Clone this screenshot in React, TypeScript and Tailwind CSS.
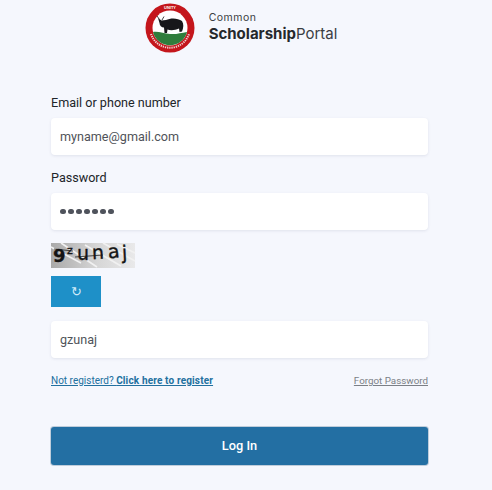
import React from "react";

function Logo() {
  return (
    <svg width="50" height="50" viewBox="0 0 50 50" className="shrink-0">
      <circle cx="25" cy="25" r="24.5" fill="#c4161c" />
      <circle cx="25" cy="25" r="17.5" fill="#ffffff" />
      <path d="M8 29 A17.5 17.5 0 0 0 42 29 C36 30 31 31.5 25 31 C19 30.5 13 28 8 29 Z" fill="#2f7d3c" />
      <path d="M13 15 L16.5 17.5 L21 17 C26 14.5 33 15 37 18 C39 21 38.5 25 37 28.5 L34.5 29 L34 25.5 C30 27.5 25 27.5 22.5 26.5 L22 30 L19.5 30 L19 24.5 C16.5 24.5 14.5 22.5 14.5 20 Z" fill="#17171a" />
      <path d="M12 13 L14.5 16.5 M19 13.5 L17 17" stroke="#444" strokeWidth="1" />
      <path d="M6 31 A20 20 0 0 0 44 31" fill="none" stroke="#f0d2d2" strokeWidth="2" strokeDasharray="1.3 0.9" />
      <text x="25" y="6.2" textAnchor="middle" fontSize="4" fontWeight="700" fill="#ffffff" style={{ fontFamily: "'Liberation Sans', sans-serif" }}>UNITY</text>
    </svg>
  );
}

function Captcha() {
  return (
    <svg width="84" height="25" viewBox="0 0 84 25" className="block overflow-visible">
      <defs>
        <linearGradient id="g" x1="0" y1="0" x2="1" y2="0">
          <stop offset="0" stopColor="#a9a9a9" />
          <stop offset="0.55" stopColor="#d6d6d6" />
          <stop offset="1" stopColor="#e9e9ea" />
        </linearGradient>
      </defs>
      <rect width="84" height="25" fill="url(#g)" />
      <path d="M0 4 L30 20 M10 0 L46 24 M34 2 L70 23 M52 0 L84 18 M66 1 L84 10" stroke="#f1f1f1" strokeWidth="1.6" />
      <path d="M3 6 L22 8 M24 14 L52 12" stroke="#222" strokeWidth="0.8" />
      <g fill="#141414" stroke="#141414" strokeWidth="0.35" style={{ fontFamily: "'DejaVu Sans', sans-serif" }}>
        <text x="2" y="19" fontSize="18" fontWeight="700">9</text>
        <text x="16" y="11" fontSize="11">z</text>
        <text x="26" y="17" fontSize="19">u</text>
        <text x="41" y="16" fontSize="19" transform="rotate(-3 48 12)">n</text>
        <text x="57" y="15" fontSize="19" transform="rotate(-6 62 11)">a</text>
        <text x="71" y="16" fontSize="19" transform="rotate(-3 74 11)">j</text>
      </g>
    </svg>
  );
}

function Field({ value, dots }: { value: string; dots?: boolean }) {
  return (
    <div className="flex h-[37px] items-center rounded-[4px] bg-white pl-[9px] shadow-[0_1px_3px_rgba(40,50,90,0.10)]">
      {dots ? (
        <span className="flex gap-[2px]">
          {[0, 1, 2, 3, 4, 5, 6].map((i) => (
            <span key={i} className="h-[5px] w-[6px] rounded-full bg-[#4f535c]" />
          ))}
        </span>
      ) : (
        <span className="pt-[1px] text-[12.6px] leading-none text-[#4f5359]">{value}</span>
      )}
    </div>
  );
}

export default function App() {
  return (
    <div className="h-[490px] w-[492px] overflow-hidden bg-[#f5f7fd] font-['Roboto',sans-serif]">
      <header className="flex h-[96px] items-start justify-center gap-[14px] pr-[10px] pt-[3px]">
        <Logo />
        <div className="pt-[8px] font-['Inter',sans-serif] text-[#3a3d42]">
          <div className="text-[10.5px] leading-[14px] tracking-[0.5px]">Common</div>
          <div className="text-[15px] leading-[18px]">
            <span className="font-bold text-[#25282c]">Scholarship</span>
            <span>Portal</span>
          </div>
        </div>
      </header>

      <form className="mx-[51px] w-[377px]">
        <label className="block text-[12.6px] leading-[14px] text-[#212529]">Email or phone number</label>
        <div className="mt-[8px]">
          <Field value="myname@gmail.com" />
        </div>
        <label className="mt-[15px] block text-[12.6px] leading-[16px] text-[#212529]">Password</label>
        <div className="mt-[7px]">
          <Field value="" dots />
        </div>
        <div className="mt-[13px]">
          <Captcha />
        </div>
        <button
          type="button"
          className="mt-[8px] flex h-[31px] w-[50px] items-center justify-center bg-[#1e90c8] text-[13px] text-[#cfeaf8]"
        >
          ↻
        </button>
        <div className="mt-[14px]">
          <Field value="gzunaj" />
        </div>
        <div className="mt-[17px] flex items-center justify-between text-[10px] leading-[12px]">
          <a className="text-[#22709f] underline">
            Not registerd? <b className="font-bold tracking-[0.15px]">Click here to register</b>
          </a>
          <a className="text-[9.8px] text-[#7b7f86] underline">Forgot Password</a>
        </div>
        <button
          type="button"
          className="mt-[40px] flex h-[38px] w-full items-center justify-center rounded-[3px] bg-[#236fa3] text-[12.8px] font-medium text-white shadow-[0_0_0_1px_rgba(30,80,120,0.25)]"
        >
          Log In
        </button>
      </form>
    </div>
  );
}
